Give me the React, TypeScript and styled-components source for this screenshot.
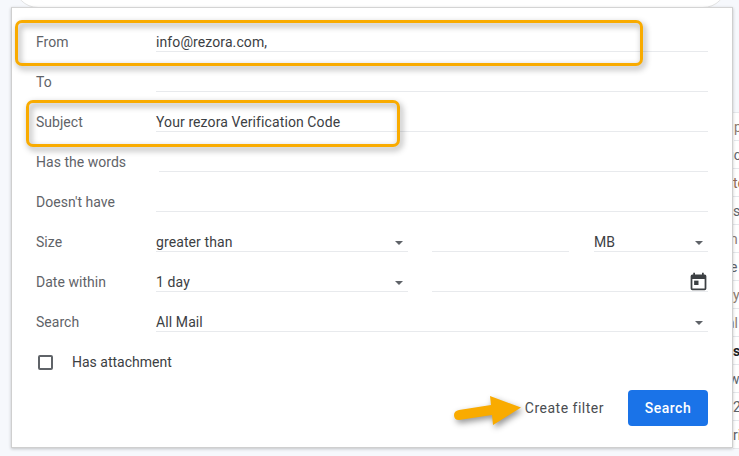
import React from "react";
import styled, { createGlobalStyle } from "styled-components";

const Global = createGlobalStyle`
  html, body { margin: 0; padding: 0; background: #f6f8fc; }
  * { box-sizing: border-box; }
`;

const Page = styled.div`
  position: relative;
  width: 739px;
  height: 456px;
  overflow: hidden;
  display: flex;
  align-items: flex-start;
  padding: 7px 0 0 11px;
  background: #f6f8fc;
  font-family: Roboto, "Liberation Sans", Arial, sans-serif;
  -webkit-font-smoothing: antialiased;
`;

const SearchBarEdge = styled.div`
  position: absolute;
  left: 14px;
  top: -40px;
  width: 713px;
  height: 48px;
  border-radius: 24px;
  background: #fff;
  border: 1px solid #e3e3e3;
`;

const Panel = styled.section`
  position: relative;
  z-index: 1;
  flex: none;
  width: 722px;
  height: 441px;
  padding: 4px 24px 0;
  background: #fff;
  border: 1px solid #cfcfcf;
  border-top-color: #d4d4d4;
  box-shadow: 0 1px 3px rgba(0, 0, 0, 0.22);
`;

const Row = styled.div`
  display: flex;
  height: 40px;
  align-items: stretch;
`;

const Label = styled.div`
  flex: none;
  width: 120px;
  font-size: 14px;
  line-height: 20px;
  padding-top: 20px;
  letter-spacing: 0.03px;
  color: #5f6368;
`;

const Fields = styled.div`
  flex: 1;
  display: flex;
  min-width: 0;
`;

const Field = styled.div<{ $width?: number; $gap?: number }>`
  flex: ${(p) => (p.$width ? `none` : `1`)};
  ${(p) => (p.$width ? `width: ${p.$width}px;` : "")}
  margin-left: ${(p) => p.$gap ?? 0}px;
  display: flex;
  align-items: center;
  justify-content: space-between;
  border-bottom: 1px solid #e8eaed;
  font-size: 14px;
  line-height: 20px;
  padding-top: 22px;
  height: 40px;
  color: #3c4043;
`;

const Value = styled.span`
  margin-top: -1px;
  letter-spacing: 0.1px;
`;

const Caret = styled.span`
  flex: none;
  width: 0;
  height: 0;
  margin-right: 5px;
  margin-top: 1px;
  border-left: 4.5px solid transparent;
  border-right: 4.5px solid transparent;
  border-top: 4px solid #5f6368;
`;

const CalendarIcon = styled.svg`
  flex: none;
  width: 21px;
  height: 21px;
  margin: -2px -1px 0 0;
  fill: #3c4043;
`;

const CheckRow = styled.label`
  display: flex;
  align-items: center;
  height: 40px;
  padding: 20px 0 0 2px;
  font-size: 14px;
  line-height: 20px;
  color: #3c4043;
`;

const CheckBox = styled.span`
  flex: none;
  width: 15px;
  height: 15px;
  margin-right: 19px;
  border: 2px solid #5f6368;
  border-radius: 2px;
`;

const CheckText = styled.span`
  letter-spacing: 0;
`;

const Actions = styled.div`
  display: flex;
  justify-content: flex-end;
  align-items: center;
  gap: 24px;
  margin-top: 18px;
`;

const TextButton = styled.button`
  border: 0;
  padding: 0;
  background: none;
  font: 400 14px/20px Roboto, "Liberation Sans", Arial, sans-serif;
  letter-spacing: 0.5px;
  color: #4a4d51;
`;

const PrimaryButton = styled.button`
  width: 80px;
  height: 36px;
  border: 0;
  border-radius: 4px;
  background: #1a73e8;
  color: #fff;
  font: 500 14px/20px Roboto, "Liberation Sans", Arial, sans-serif;
  letter-spacing: 0.5px;
`;

const Highlight = styled.div<{ $x: number; $y: number; $w: number; $h: number }>`
  position: absolute;
  z-index: 2;
  left: ${(p) => p.$x}px;
  top: ${(p) => p.$y}px;
  width: ${(p) => p.$w}px;
  height: ${(p) => p.$h}px;
  border: 3px solid #f9ab00;
  border-radius: 7px;
  filter: drop-shadow(2px 3px 3px rgba(0, 0, 0, 0.42));
  pointer-events: none;
`;

const Arrow = styled.svg`
  position: absolute;
  z-index: 2;
  left: 450px;
  top: 392px;
  width: 76px;
  height: 40px;
  overflow: visible;
  filter: drop-shadow(2px 3px 3px rgba(0, 0, 0, 0.42));
`;

const MailList = styled.div`
  flex: 1;
  min-width: 0;
  margin-top: 105px;
  overflow: hidden;
  background: #fff;
  border-top: 1px solid #e6e8ec;
`;

const MailRow = styled.div<{ $color: string; $bold?: boolean; $shift: number }>`
  height: 28px;
  border-bottom: 1px solid #e6e8ec;
  margin-left: ${(p) => p.$shift}px;
  font-size: 14px;
  line-height: 29px;
  white-space: nowrap;
  color: ${(p) => p.$color};
  font-weight: ${(p) => (p.$bold ? 700 : 400)};
`;

const mail: { t: string; c: string; b?: boolean; s: number }[] = [
  { t: "p", c: "#8a7a6e", s: 1 },
  { t: "uc", c: "#5f6368", s: -7 },
  { t: "te", c: "#8f6a55", s: 0 },
  { t: "s", c: "#5f6368", s: 0 },
  { t: "n", c: "#8a7a6e", s: -3 },
  { t: "e", c: "#5f6368", s: -3 },
  { t: "y", c: "#8a7a6e", s: 0 },
  { t: "al", c: "#8a7a6e", s: -6 },
  { t: "s", c: "#202124", b: true, s: 0 },
  { t: "w", c: "#5f6368", s: -4 },
  { t: "2", c: "#5f6368", s: 0 },
  { t: "ri", c: "#5f6368", s: 0 },
];

function Select({ text, width, gap }: { text: string; width?: number; gap?: number }) {
  return (
    <Field $width={width} $gap={gap}>
      <Value>{text}</Value>
      <Caret />
    </Field>
  );
}

export default function App() {
  return (
    <>
      <Global />
      <Page>
        <SearchBarEdge />
        <Panel>
          <Row>
            <Label>From</Label>
            <Fields><Field><Value>info@rezora.com,</Value></Field></Fields>
          </Row>
          <Row>
            <Label>To</Label>
            <Fields><Field /></Fields>
          </Row>
          <Row>
            <Label>Subject</Label>
            <Fields><Field><Value>Your rezora Verification Code</Value></Field></Fields>
          </Row>
          <Row>
            <Label>Has the words</Label>
            <Fields><Field $gap={3} /></Fields>
          </Row>
          <Row>
            <Label>Doesn't have</Label>
            <Fields><Field /></Fields>
          </Row>
          <Row>
            <Label>Size</Label>
            <Fields>
              <Select text="greater than" width={252} />
              <Field $width={137} $gap={24} />
              <Select text="MB" width={114} gap={25} />
            </Fields>
          </Row>
          <Row>
            <Label>Date within</Label>
            <Fields>
              <Select text="1 day" width={252} />
              <Field $gap={24}>
                <span />
                <CalendarIcon viewBox="0 0 24 24">
                  <path d="M19 4h-1V2h-2v2H8V2H6v2H5a2 2 0 0 0-2 2v14a2 2 0 0 0 2 2h14a2 2 0 0 0 2-2V6a2 2 0 0 0-2-2zm0 16H5V9h14v11z" />
                  <rect x="7" y="11" width="5" height="5" />
                </CalendarIcon>
              </Field>
            </Fields>
          </Row>
          <Row>
            <Label>Search</Label>
            <Fields><Select text="All Mail" /></Fields>
          </Row>
          <CheckRow>
            <CheckBox />
            <CheckText>Has attachment</CheckText>
          </CheckRow>
          <Actions>
            <TextButton>Create filter</TextButton>
            <PrimaryButton>Search</PrimaryButton>
          </Actions>
        </Panel>
        <MailList>
          {mail.map((m, i) => (
            <MailRow key={i} $color={m.c} $bold={m.b} $shift={m.s}>{m.t}</MailRow>
          ))}
        </MailList>
        <Highlight $x={15} $y={20} $w={628} $h={46} />
        <Highlight $x={26} $y={100} $w={374} $h={47} />
        <Arrow viewBox="0 0 76 40">
          <path
            d="M9 18 L41 13 L40 4 L71 15.5 L43 33 L42 23 L9 28 Q4 28 4 23 Q4 19 9 18 Z"
            fill="#f9ab00"
          />
        </Arrow>
      </Page>
    </>
  );
}
